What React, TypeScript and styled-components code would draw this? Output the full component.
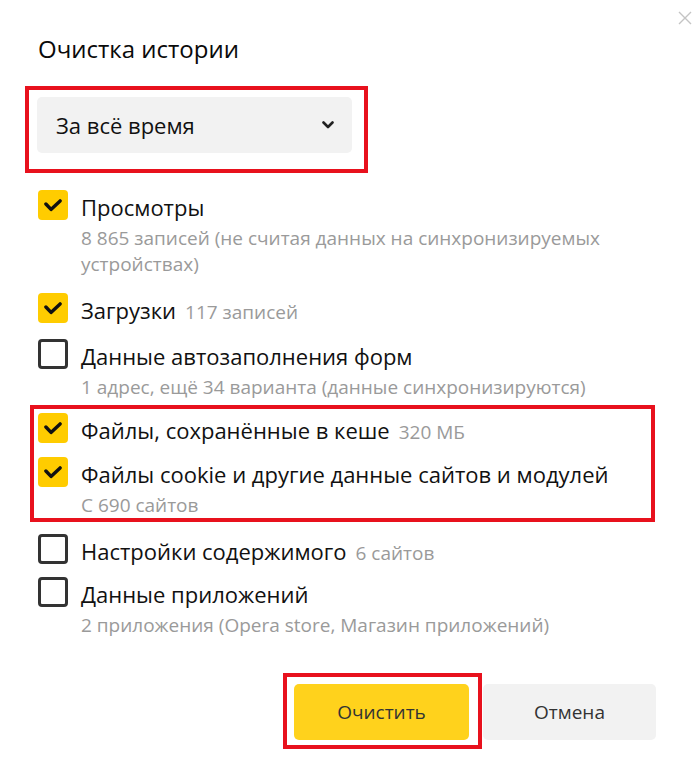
import React from 'react';
import styled, { createGlobalStyle } from 'styled-components';

const GlobalStyle = createGlobalStyle`
  html, body {
    margin: 0;
    padding: 0;
    background: #ffffff;
  }
  body {
    font-family: 'Open Sans', 'Noto Sans', 'DejaVu Sans', sans-serif;
    color: #111111;
  }
`;

const Dialog = styled.div`
  position: relative;
  width: 700px;
  height: 779px;
  box-sizing: border-box;
  padding: 35px 44px 0 38px;
  background: #ffffff;
`;

const CloseButton = styled.button`
  position: absolute;
  top: 10px;
  right: 8px;
  width: 15px;
  height: 15px;
  padding: 0;
  border: none;
  background: transparent;
  display: flex;
  align-items: center;
  justify-content: center;
  cursor: pointer;
`;

const Title = styled.h1`
  margin: 0 0 23px;
  font-size: 24px;
  line-height: 28px;
  font-weight: 400;
  color: #0a0a0a;
`;

const Highlight = styled.div<{ $offset: number; $width: number }>`
  box-sizing: border-box;
  width: ${({ $width }) => $width}px;
  margin-left: -${({ $offset }) => $offset}px;
  border: 4px solid #e8111d;
`;

const SelectFrame = styled(Highlight)`
  padding: 7px 12px 16px 8px;
`;

const Select = styled.div`
  width: 315px;
  height: 56px;
  box-sizing: border-box;
  padding: 0 18px 0 19px;
  border-radius: 5px;
  background: #f2f2f2;
  display: flex;
  align-items: center;
  justify-content: space-between;
  font-size: 22px;
  color: #111111;
`;

const List = styled.div`
  margin-top: 17px;
  display: flex;
  flex-direction: column;
`;

const Item = styled.div<{ $gap: number }>`
  display: flex;
  align-items: flex-start;
  margin-top: ${({ $gap }) => $gap}px;
`;

const GroupFrame = styled(Highlight)`
  margin-top: 5px;
  padding: 4px 0 0 4px;
`;

const Box = styled.span<{ $checked: boolean }>`
  flex: none;
  width: 30px;
  height: 30px;
  box-sizing: border-box;
  border-radius: 4px;
  display: flex;
  align-items: center;
  justify-content: center;
  background: ${({ $checked }) => ($checked ? '#ffcc00' : '#ffffff')};
  border: ${({ $checked }) => ($checked ? 'none' : '3px solid #333333')};
`;

const Content = styled.div`
  margin-left: 13px;
  display: flex;
  flex-direction: column;
`;

const Label = styled.div`
  height: 30px;
  padding-top: 2px;
  font-size: 22px;
  line-height: 30px;
  color: #111111;
  white-space: nowrap;
`;

const Count = styled.span`
  margin-left: 9px;
  font-size: 19px;
  line-height: 1;
  color: #9a9a9a;
`;

const Hint = styled.div`
  margin-top: 3px;
  max-width: 540px;
  font-size: 19px;
  line-height: 26px;
  color: #9a9a9a;
`;

const Footer = styled.div`
  margin-top: 35px;
  display: flex;
  justify-content: flex-end;
  align-items: flex-start;
`;

const ButtonFrame = styled.div`
  box-sizing: border-box;
  border: 4px solid #e8111d;
  padding: 7px 9px 5px 7px;
`;

const Button = styled.button<{ $primary?: boolean }>`
  width: ${({ $primary }) => ($primary ? 175 : 173)}px;
  height: 56px;
  border: none;
  border-radius: 5px;
  font-family: inherit;
  font-size: 19px;
  color: #333333;
  background: ${({ $primary }) => ($primary ? '#ffd21c' : '#f2f2f2')};
  cursor: pointer;
`;

const SecondaryButton = styled(Button)`
  margin-top: 11px;
  margin-left: 1px;
`;

const Check = () => (
  <svg width="18" height="13" viewBox="0 0 18 13" fill="none">
    <path d="M1.9 5 L7 10.4 L16.1 1.9" stroke="#111" strokeWidth="3.4" strokeLinecap="round" strokeLinejoin="round" />
  </svg>
);

const Chevron = () => (
  <svg width="12" height="8" viewBox="0 0 12 8" fill="none">
    <path d="M1.5 1.5 L6 6 L10.5 1.5" stroke="#222" strokeWidth="2.6" strokeLinecap="round" strokeLinejoin="round" />
  </svg>
);

const CloseIcon = () => (
  <svg width="14" height="14" viewBox="0 0 14 14" fill="none">
    <path d="M1 1 L13 13 M13 1 L1 13" stroke="#c4c4c4" strokeWidth="1.4" />
  </svg>
);

interface RowProps {
  checked: boolean;
  label: string;
  count?: string;
  hint?: string;
  gap?: number;
}

function Row({ checked, label, count, hint, gap = 0 }: RowProps) {
  return (
    <Item $gap={gap}>
      <Box $checked={checked}>{checked && <Check />}</Box>
      <Content>
        <Label>
          {label}
          {count && <Count>{count}</Count>}
        </Label>
        {hint && <Hint>{hint}</Hint>}
      </Content>
    </Item>
  );
}

export default function App() {
  return (
    <>
      <GlobalStyle />
      <Dialog>
        <CloseButton aria-label="Закрыть">
          <CloseIcon />
        </CloseButton>
        <Title>Очистка истории</Title>
        <SelectFrame $offset={13} $width={343}>
          <Select>
            За всё время
            <Chevron />
          </Select>
        </SelectFrame>
        <List>
          <Row
            checked
            label="Просмотры"
            hint="8 865 записей (не считая данных на синхронизируемых устройствах)"
          />
          <Row checked label="Загрузки" count="117 записей" gap={16} />
          <Row
            checked={false}
            label="Данные автозаполнения форм"
            hint="1 адрес, ещё 34 варианта (данные синхронизируются)"
            gap={14}
          />
          <GroupFrame $offset={8} $width={625}>
            <Row checked label="Файлы, сохранённые в кеше" count="320 МБ" />
            <Row
              checked
              label="Файлы cookie и другие данные сайтов и модулей"
              hint="С 690 сайтов"
              gap={12}
            />
          </GroupFrame>
          <Row checked={false} label="Настройки содержимого" count="6 сайтов" gap={12} />
          <Row
            checked={false}
            label="Данные приложений"
            hint="2 приложения (Opera store, Магазин приложений)"
            gap={11}
          />
        </List>
        <Footer>
          <ButtonFrame>
            <Button $primary>Очистить</Button>
          </ButtonFrame>
          <SecondaryButton>Отмена</SecondaryButton>
        </Footer>
      </Dialog>
    </>
  );
}
